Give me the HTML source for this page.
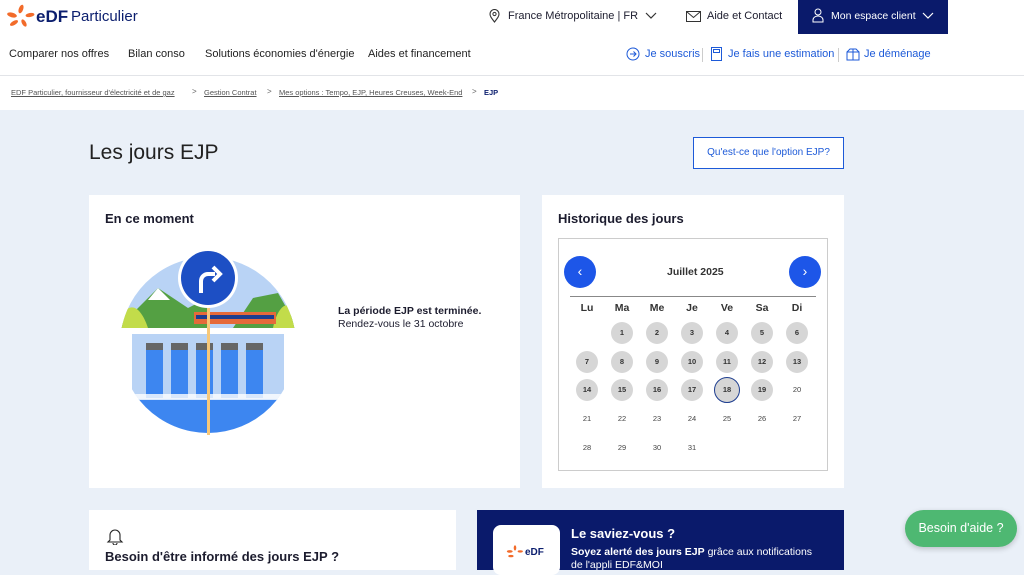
<!DOCTYPE html>
<html><head><meta charset="utf-8"><style>
*{margin:0;padding:0;box-sizing:border-box}
body{width:1024px;height:565px;overflow:hidden;background:#eaf0f8;font-family:"Liberation Sans",sans-serif;color:#1c1c2e;position:relative}
.a{position:absolute;white-space:nowrap}
.hdr{position:absolute;left:0;top:0;width:1024px;height:110px;background:#fff}
.line{position:absolute;left:0;top:75px;width:1024px;height:1px;background:#e2e4e8}
.nav{font-size:11px;color:#222;top:48px}
.bl{color:#1d5ad8;font-size:11px;top:48px}
.bc{font-size:7.5px;color:#555;text-decoration:underline;top:88px}
.card{position:absolute;background:#fff}
.d{position:absolute;width:22px;height:22px;border-radius:50%;background:#d6d6d6;font-size:7.5px;font-weight:bold;color:#333;text-align:center;line-height:22px;margin-left:-11px;margin-top:-11px}
.d.n{background:none;color:#444;font-weight:normal}
.h{position:absolute;font-size:10.5px;font-weight:bold;color:#333;transform:translateX(-50%)}
</style></head><body>
<div class="hdr"></div><div class="line"></div>
<svg class="a" style="left:6px;top:4px" width="30" height="24" viewBox="0 0 30 24"><g fill="#f26b2a"><ellipse cx="6" cy="11" rx="5" ry="2.3" transform="rotate(15 6 11)"/><ellipse cx="15" cy="5" rx="2.2" ry="4.5" transform="rotate(20 15 5)"/><ellipse cx="24" cy="11" rx="4.5" ry="2" transform="rotate(-10 24 11)"/><ellipse cx="8" cy="19" rx="4.5" ry="2" transform="rotate(-30 8 19)"/><ellipse cx="18" cy="19" rx="2" ry="4" transform="rotate(-30 18 19)"/></g></svg>
<div class="a" style="left:36px;top:7px;font-size:17px;font-weight:bold;color:#0b1e6e">eDF</div>
<div class="a" style="left:71px;top:8px;font-size:15px;color:#0b1e6e">Particulier</div>
<svg class="a" style="left:489px;top:9px" width="11" height="14" viewBox="0 0 11 14"><path d="M5.5 13C2 8.5 1 7 1 5a4.5 4.5 0 0 1 9 0c0 2-1 3.5-4.5 8z" fill="none" stroke="#333" stroke-width="1.1"/><circle cx="5.5" cy="5" r="1.6" fill="none" stroke="#333"/></svg>
<div class="a" style="left:508px;top:10px;font-size:11px">France Métropolitaine | FR</div>
<svg class="a" style="left:645px;top:12px" width="12" height="8"><path d="M1 1l5 5 5-5" fill="none" stroke="#333" stroke-width="1.2"/></svg>
<svg class="a" style="left:686px;top:11px" width="15" height="11"><rect x=".5" y=".5" width="14" height="10" fill="none" stroke="#333"/><path d="M.5 .5l7 6 7-6" fill="none" stroke="#333"/></svg>
<div class="a" style="left:707px;top:10px;font-size:11px">Aide et Contact</div>
<div class="a" style="left:798px;top:0;width:150px;height:34px;background:#0a1a6b"></div>
<svg class="a" style="left:812px;top:8px" width="12" height="15"><circle cx="6" cy="4" r="3" fill="none" stroke="#fff"/><path d="M1 14v-2a5 4 0 0 1 10 0v2z" fill="none" stroke="#fff"/></svg>
<div class="a" style="left:831px;top:10px;font-size:10.5px;color:#fff">Mon espace client</div>
<svg class="a" style="left:922px;top:12px" width="12" height="8"><path d="M1 1l5 5 5-5" fill="none" stroke="#fff" stroke-width="1.2"/></svg>
<div class="a nav" style="left:9px">Comparer nos offres</div>
<div class="a nav" style="left:128px">Bilan conso</div>
<div class="a nav" style="left:205px">Solutions économies d'énergie</div>
<div class="a nav" style="left:368px">Aides et financement</div>
<svg class="a" style="left:626px;top:47px" width="14" height="14"><circle cx="7" cy="7" r="6" fill="none" stroke="#1d5ad8"/><path d="M4 7h6M7.5 4.5 10 7 7.5 9.5" fill="none" stroke="#1d5ad8"/></svg>
<div class="a bl" style="left:645px">Je souscris</div>
<div class="a" style="left:702px;top:48px;width:1px;height:14px;background:#ccc"></div>
<svg class="a" style="left:711px;top:47px" width="11" height="14"><rect x=".5" y=".5" width="10" height="13" fill="none" stroke="#1d5ad8"/><rect x="2.5" y="2.5" width="6" height="3" fill="none" stroke="#1d5ad8"/></svg>
<div class="a bl" style="left:728px">Je fais une estimation</div>
<div class="a" style="left:838px;top:48px;width:1px;height:14px;background:#ccc"></div>
<svg class="a" style="left:846px;top:48px" width="14" height="13"><rect x="1" y="4" width="12" height="8" fill="none" stroke="#1d5ad8"/><path d="M1 4l3-3h6l3 3M7 1v11" fill="none" stroke="#1d5ad8"/></svg>
<div class="a bl" style="left:864px">Je déménage</div>
<div class="a bc" style="left:11px">EDF Particulier, fournisseur d'électricité et de gaz</div>
<div class="a" style="left:192px;top:87px;font-size:8px;color:#666">&gt;</div>
<div class="a bc" style="left:204px">Gestion Contrat</div>
<div class="a" style="left:267px;top:87px;font-size:8px;color:#666">&gt;</div>
<div class="a bc" style="left:279px">Mes options : Tempo, EJP, Heures Creuses, Week-End</div>
<div class="a" style="left:472px;top:87px;font-size:8px;color:#666">&gt;</div>
<div class="a" style="left:484px;top:88px;font-size:7.5px;color:#0b1e6e;font-weight:bold">EJP</div>

<div class="a" style="left:89px;top:141px;font-size:21px;color:#222">Les jours EJP</div>
<div class="a" style="left:693px;top:137px;width:151px;height:32px;border:1px solid #1d5ad8;background:#fff;color:#1d5ad8;font-size:10px;text-align:center;line-height:30px">Qu'est-ce que l'option EJP?</div>

<div class="card" style="left:89px;top:195px;width:431px;height:293px"></div>
<div class="a" style="left:105px;top:211px;font-size:13px;font-weight:bold">En ce moment</div>
<svg class="a" style="left:118px;top:248px" width="180" height="187" viewBox="0 0 180 187">
<defs><clipPath id="c"><circle cx="90" cy="97" r="88"/></clipPath></defs>
<g clip-path="url(#c)">
<rect x="0" y="0" width="180" height="80" fill="#b9d3f5"/>
<path d="M0 80 L40 40 L70 60 L90 50 L90 80z" fill="#54a043"/><path d="M40 40 L52 52 L30 52z" fill="#fff"/>
<path d="M115 80 L135 50 L160 45 L180 80z" fill="#54a043"/>
<path d="M0 80 C5 55 20 50 30 80z" fill="#c2dc4a"/><path d="M155 80 C160 55 175 45 180 80z" fill="#c2dc4a"/>
<rect x="76" y="64" width="82" height="12" fill="#e56a3a"/><rect x="78" y="67" width="78" height="4" fill="#1d3d8f"/>
<rect x="0" y="86" width="180" height="65" fill="#b9d3f5"/>
<g fill="#3d86f0"><rect x="28" y="95" width="17" height="55"/><rect x="53" y="95" width="17" height="55"/><rect x="78" y="95" width="17" height="55"/><rect x="103" y="95" width="17" height="55"/><rect x="128" y="95" width="17" height="55"/></g>
<g fill="#666"><rect x="28" y="95" width="17" height="7"/><rect x="53" y="95" width="17" height="7"/><rect x="78" y="95" width="17" height="7"/><rect x="103" y="95" width="17" height="7"/><rect x="128" y="95" width="17" height="7"/></g>
<rect x="0" y="151" width="180" height="40" fill="#3d86f0"/>
<rect x="0" y="146" width="180" height="6" fill="#fff" opacity=".8"/>
</g>
<rect x="0" y="86" width="14" height="60" fill="#fff"/><rect x="166" y="86" width="14" height="60" fill="#fff"/>
<rect x="89" y="30" width="3" height="157" fill="#f7c87a"/>
<circle cx="90" cy="30" r="30" fill="#fff"/><circle cx="90" cy="30" r="27" fill="#1d4fc4"/>
<path d="M83 45 V33 a7 7 0 0 1 7-7 h7" fill="none" stroke="#fff" stroke-width="4"/><path d="M95 19 l7 7 -7 7" fill="none" stroke="#fff" stroke-width="4"/>
</svg>
<div class="a" style="left:338px;top:305px;font-size:10.5px;font-weight:bold">La période EJP est terminée.</div>
<div class="a" style="left:338px;top:318px;font-size:10.5px">Rendez-vous le 31 octobre</div>

<div class="card" style="left:542px;top:195px;width:302px;height:293px"></div>
<div class="a" style="left:558px;top:211px;font-size:13px;font-weight:bold">Historique des jours</div>
<div class="a" style="left:558px;top:238px;width:270px;height:233px;border:1px solid #ccc"></div>
<div class="a" style="left:564px;top:256px;width:32px;height:32px;border-radius:50%;background:#1d56e8;color:#fff;text-align:center;line-height:30px;font-size:14px">‹</div>
<div class="a" style="left:789px;top:256px;width:32px;height:32px;border-radius:50%;background:#1d56e8;color:#fff;text-align:center;line-height:30px;font-size:14px">›</div>
<div class="a" style="left:667px;top:266px;font-size:10.5px;font-weight:bold;color:#333">Juillet 2025</div>
<div class="a" style="left:570px;top:296px;width:246px;height:1px;background:#888"></div>
<div class="h" style="left:587px;top:302px">Lu</div><div class="h" style="left:622px;top:302px">Ma</div><div class="h" style="left:657px;top:302px">Me</div><div class="h" style="left:692px;top:302px">Je</div><div class="h" style="left:727px;top:302px">Ve</div><div class="h" style="left:762px;top:302px">Sa</div><div class="h" style="left:797px;top:302px">Di</div>
<div class="d" style="left:622px;top:333px">1</div><div class="d" style="left:657px;top:333px">2</div><div class="d" style="left:692px;top:333px">3</div><div class="d" style="left:727px;top:333px">4</div><div class="d" style="left:762px;top:333px">5</div><div class="d" style="left:797px;top:333px">6</div>
<div class="d" style="left:587px;top:362px">7</div><div class="d" style="left:622px;top:362px">8</div><div class="d" style="left:657px;top:362px">9</div><div class="d" style="left:692px;top:362px">10</div><div class="d" style="left:727px;top:362px">11</div><div class="d" style="left:762px;top:362px">12</div><div class="d" style="left:797px;top:362px">13</div>
<div class="d" style="left:587px;top:390px">14</div><div class="d" style="left:622px;top:390px">15</div><div class="d" style="left:657px;top:390px">16</div><div class="d" style="left:692px;top:390px">17</div><div class="d" style="left:727px;top:390px;width:26px;height:26px;line-height:24px;margin:-13px;border:1.5px solid #1d3d8f">18</div><div class="d" style="left:762px;top:390px">19</div><div class="d n" style="left:797px;top:390px">20</div>
<div class="d n" style="left:587px;top:419px">21</div><div class="d n" style="left:622px;top:419px">22</div><div class="d n" style="left:657px;top:419px">23</div><div class="d n" style="left:692px;top:419px">24</div><div class="d n" style="left:727px;top:419px">25</div><div class="d n" style="left:762px;top:419px">26</div><div class="d n" style="left:797px;top:419px">27</div>
<div class="d n" style="left:587px;top:448px">28</div><div class="d n" style="left:622px;top:448px">29</div><div class="d n" style="left:657px;top:448px">30</div><div class="d n" style="left:692px;top:448px">31</div>

<div class="card" style="left:89px;top:510px;width:367px;height:60px"></div>
<svg class="a" style="left:106px;top:527px" width="18" height="18"><path d="M4 13V8a5 5 0 0 1 10 0v5l2 2H2z M7 16a2 2 0 0 0 4 0" fill="none" stroke="#222" stroke-width="1.1"/></svg>
<div class="a" style="left:105px;top:549px;font-size:13px;font-weight:bold">Besoin d'être informé des jours EJP ?</div>
<div class="card" style="left:477px;top:510px;width:367px;height:60px;background:#0a1a6b"></div>
<div class="a" style="left:493px;top:525px;width:67px;height:50px;background:#fff;border-radius:8px"></div>
<div class="a" style="left:525px;top:547px;font-size:10px;font-weight:bold;color:#0b1e6e">eDF</div>
<svg class="a" style="left:506px;top:545px" width="18" height="14" viewBox="0 0 30 24"><g fill="#f26b2a"><ellipse cx="6" cy="11" rx="5" ry="2.3"/><ellipse cx="15" cy="5" rx="2.2" ry="4.5"/><ellipse cx="24" cy="11" rx="4.5" ry="2"/><ellipse cx="8" cy="19" rx="4.5" ry="2"/></g></svg>
<div class="a" style="left:571px;top:526px;font-size:13px;font-weight:bold;color:#fff">Le saviez-vous ?</div>
<div class="a" style="left:571px;top:546px;font-size:10.5px;color:#fff"><b>Soyez alerté des jours EJP</b> grâce aux notifications</div>
<div class="a" style="left:571px;top:559px;font-size:10.5px;color:#fff">de l'appli EDF&amp;MOI</div>
<div class="a" style="left:905px;top:510px;width:112px;height:37px;border-radius:19px;background:#4eb872;color:#fff;font-size:12.5px;text-align:center;line-height:37px;box-shadow:0 2px 6px rgba(0,0,0,.2)">Besoin d'aide ?</div>
</body></html>
